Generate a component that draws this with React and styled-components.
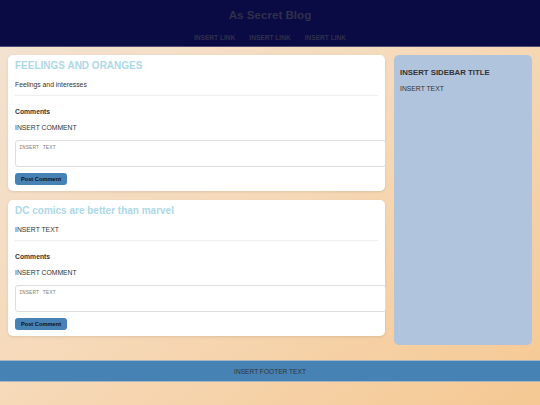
import React from 'react'
import styled, { createGlobalStyle } from 'styled-components'

const GlobalStyle = createGlobalStyle`
  html, body {
    margin: 0;
    padding: 0;
    min-height: 100%;
  }
  body {
    min-height: 100vh;
    font-family: 'Liberation Sans', Arial, sans-serif;
    color: #333;
    background: linear-gradient(to bottom right, #f2e3d3 0%, #f6d9b8 50%, #f5c892 100%);
  }
`

const Header = styled.header`
  background: #0a0a45;
  padding: 8px 0 4px;
  text-align: center;
  border-bottom: 1px solid rgba(200, 200, 210, 0.35);
`

const SiteTitle = styled.h1`
  margin: 0;
  font-size: 11.6px;
  line-height: 14px;
  font-weight: 700;
  color: #30304a;
`

const Nav = styled.nav`
  display: flex;
  justify-content: center;
  gap: 14px;
  margin-top: 12px;
`

const NavLink = styled.a`
  font-size: 6.6px;
  line-height: 8px;
  font-weight: 700;
  color: #30304a;
  text-decoration: none;
  text-transform: uppercase;
`

const Container = styled.div`
  display: grid;
  grid-template-columns: 1fr 138px;
  gap: 9px;
  padding: 8px 8px 15px;
  align-items: stretch;
`

const Main = styled.main`
  display: flex;
  flex-direction: column;
`

const Card = styled.article`
  background: #fff;
  border-radius: 5px;
  box-shadow: 0 1px 3px rgba(0, 0, 0, 0.1);
  padding: 5px 7px 6px;
  margin-bottom: 9px;
`

const PostTitle = styled.h2`
  margin: 0;
  font-size: 10px;
  line-height: 12px;
  font-weight: 700;
  color: #add8e6;
`

const Text = styled.p`
  margin: ${p => p.$top || 0}px 0 0;
  font-size: 6.8px;
  line-height: 8px;
  font-weight: ${p => (p.$bold ? 700 : 400)};
`

const Divider = styled.hr`
  margin: 6px 0 0;
  border: 0;
  border-top: 1px solid #eee;
`

const CommentBox = styled.textarea`
  display: block;
  width: 100%;
  height: 19px;
  margin-top: 8px;
  padding: 3px;
  border: 1px solid #ddd;
  border-radius: 3px;
  resize: none;
  font-family: 'Liberation Mono', monospace;
  font-size: 5.6px;
  &::placeholder {
    color: #888;
  }
`

const PostButton = styled.button`
  display: block;
  margin-top: 6px;
  height: 12px;
  width: 52px;
  padding: 0;
  border: none;
  border-radius: 3px;
  background: #4682b4;
  color: #111;
  font-family: 'Liberation Sans', Arial, sans-serif;
  font-size: 5.7px;
  font-weight: 700;
`

const Sidebar = styled.aside`
  background: #b0c4de;
  border-radius: 5px;
  padding: 14px 6px 6px;
`

const SidebarTitle = styled.h3`
  margin: 0;
  font-size: 7.8px;
  line-height: 8px;
  font-weight: 700;
  text-transform: uppercase;
`

const Footer = styled.footer`
  background: #4682b4;
  border-top: 1px solid #a8b4c0;
  border-bottom: 1px solid #a8b4c0;
  height: 20px;
  display: flex;
  align-items: center;
  justify-content: center;
  font-size: 6.6px;
  color: #333;
`

const posts = [
  { title: 'FEELINGS AND ORANGES', body: 'Feelings and interesses' },
  { title: 'DC comics are better than marvel', body: 'INSERT TEXT' },
]

const Post = ({ title, body }) => (
  <Card>
    <PostTitle>{title}</PostTitle>
    <Text $top={9}>{body}</Text>
    <Divider />
    <Text $top={12} $bold>Comments</Text>
    <Text $top={8}>INSERT COMMENT</Text>
    <CommentBox placeholder="INSERT TEXT" />
    <PostButton>Post Comment</PostButton>
  </Card>
)

const App = () => (
  <>
    <GlobalStyle />
    <Header>
      <SiteTitle>As Secret Blog</SiteTitle>
      <Nav>
        <NavLink href="#">Insert Link</NavLink>
        <NavLink href="#">Insert Link</NavLink>
        <NavLink href="#">Insert Link</NavLink>
      </Nav>
    </Header>
    <Container>
      <Main>
        {posts.map(p => (
          <Post key={p.title} {...p} />
        ))}
      </Main>
      <Sidebar>
        <SidebarTitle>Insert Sidebar Title</SidebarTitle>
        <Text $top={8}>INSERT TEXT</Text>
      </Sidebar>
    </Container>
    <Footer>INSERT FOOTER TEXT</Footer>
  </>
)

export default App
